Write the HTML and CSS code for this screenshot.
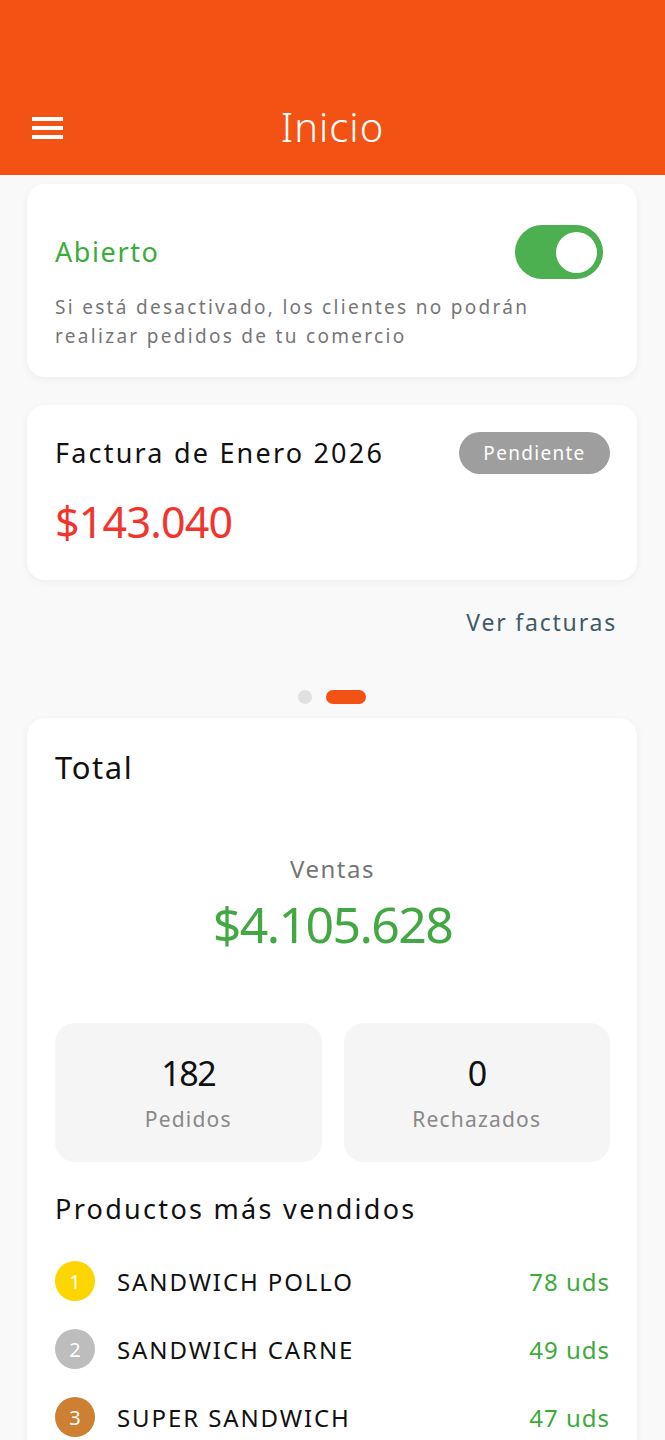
FILE: index.html
```html
<!DOCTYPE html>
<html lang="es">
<head>
<meta charset="utf-8">
<title>Inicio</title>
<link rel="stylesheet" href="styles.css">
</head>
<body>
<header class="appbar">
  <div class="toolbar">
    <div class="menu">
      <svg width="31" height="22" viewBox="0 0 31 22"><rect x="0" y="0" width="31" height="4" fill="#fff"/><rect x="0" y="9" width="31" height="4" fill="#fff"/><rect x="0" y="18" width="31" height="4" fill="#fff"/></svg>
    </div>
    <h1 class="title">Inicio</h1>
    <div></div>
  </div>
</header>
<main class="content">
  <section class="card card-status">
    <div class="status-row">
      <span class="status-label">Abierto</span>
      <span class="toggle"><span class="knob"></span></span>
    </div>
    <p class="status-desc">Si está desactivado, los clientes no podrán realizar pedidos de tu comercio</p>
  </section>

  <section class="card card-invoice">
    <div class="invoice-row">
      <span class="invoice-title">Factura de Enero 2026</span>
      <span class="badge">Pendiente</span>
    </div>
    <div class="invoice-amount">$143.040</div>
  </section>

  <div class="link-row"><a class="link">Ver facturas</a></div>

  <div class="dots"><span class="dot"></span><span class="dot dot-active"></span></div>

  <section class="card card-total">
    <h2 class="total-title">Total</h2>
    <div class="sales-label">Ventas</div>
    <div class="sales-amount">$4.105.628</div>
    <div class="stats">
      <div class="stat"><div class="stat-num">182</div><div class="stat-label">Pedidos</div></div>
      <div class="stat"><div class="stat-num">0</div><div class="stat-label">Rechazados</div></div>
    </div>
    <h3 class="products-title">Productos más vendidos</h3>
    <ul class="products">
      <li class="product"><span class="rank rank-1">1</span><span class="pname">SANDWICH POLLO</span><span class="qty">78 uds</span></li>
      <li class="product"><span class="rank rank-2">2</span><span class="pname">SANDWICH CARNE</span><span class="qty">49 uds</span></li>
      <li class="product"><span class="rank rank-3">3</span><span class="pname">SUPER SANDWICH</span><span class="qty">47 uds</span></li>
    </ul>
  </section>
</main>
</body>
</html>
```
FILE: styles.css
```css
* { box-sizing: border-box; }
html, body { margin: 0; padding: 0; }
body {
  background: #f9f9f9;
  font-family: "Noto Sans", "Open Sans", sans-serif;
  color: #111;
  width: 665px;
  min-height: 1440px;
  overflow: hidden;
}
.appbar {
  background: #f25213;
  height: 175px;
  padding-top: 80px;
}
.toolbar {
  height: 93px;
  display: grid;
  grid-template-columns: 1fr auto 1fr;
  align-items: center;
}
.menu { padding-left: 32px; display: flex; align-items: center; padding-top: 2px; }
.menu svg { display: block; }
.title {
  margin: 0;
  color: #fff;
  font-size: 40px;
  font-weight: 300;
  letter-spacing: 1px;
  line-height: 50px;
}
.content { padding: 9px 28px 0 27px; }
.card {
  background: #fff;
  border-radius: 18px;
  box-shadow: 0 2px 8px rgba(0,0,0,0.05);
}
.card-status { padding: 41px 34px 26px 28px; }
.status-row {
  display: flex;
  align-items: center;
  justify-content: space-between;
  height: 54px;
}
.status-label {
  color: #3cab3a;
  font-size: 27px;
  letter-spacing: 1.6px;
  line-height: 34px;
}
.toggle {
  width: 88px;
  height: 54px;
  border-radius: 27px;
  background: #4caf50;
  display: flex;
  align-items: center;
  justify-content: flex-end;
  padding-right: 6px;
}
.knob {
  width: 41px;
  height: 41px;
  border-radius: 50%;
  background: #fff;
}
.status-desc {
  margin: 14px 0 0;
  max-width: 530px;
  color: #767676;
  font-size: 19px;
  line-height: 29px;
  letter-spacing: 2.3px;
}
.card-invoice {
  margin-top: 28px;
  padding: 27px 27px 33px 28px;
}
.invoice-row {
  display: flex;
  align-items: center;
  justify-content: space-between;
  height: 42px;
}
.invoice-title {
  font-size: 27px;
  letter-spacing: 2.2px;
  line-height: 34px;
  color: #111;
}
.badge {
  width: 151px;
  height: 42px;
  border-radius: 21px;
  background: #9e9e9e;
  color: #fff;
  font-size: 19px;
  letter-spacing: 1.3px;
  display: flex;
  align-items: center;
  justify-content: center;
}
.invoice-amount {
  margin-top: 23px;
  color: #f2352c;
  font-size: 43px;
  line-height: 50px;
  letter-spacing: -0.8px;
}
.link-row {
  display: flex;
  justify-content: flex-end;
  margin-top: 27px;
  padding-right: 20px;
}
.link {
  color: #3e5b6b;
  font-size: 23px;
  line-height: 30px;
  letter-spacing: 1.8px;
}
.dots {
  display: flex;
  justify-content: center;
  gap: 14px;
  margin-top: 53px;
  height: 14px;
}
.dot {
  width: 14px;
  height: 14px;
  border-radius: 7px;
  background: #e0e0e0;
}
.dot-active { width: 40px; background: #f25213; }
.card-total {
  margin-top: 14px;
  padding: 29px 27px 0 28px;
  border-radius: 18px 18px 0 0;
  min-height: 740px;
}
.total-title {
  margin: 0;
  font-weight: 400;
  font-size: 31px;
  line-height: 40px;
  letter-spacing: 1.6px;
  color: #111;
}
.sales-label {
  margin-top: 67px;
  text-align: center;
  color: #767676;
  font-size: 24px;
  line-height: 30px;
  letter-spacing: 1.5px;
}
.sales-amount {
  margin-top: 10px;
  text-align: center;
  color: #43a843;
  font-size: 50px;
  line-height: 60px;
  letter-spacing: -1.6px;
}
.stats {
  margin-top: 69px;
  display: grid;
  grid-template-columns: 1fr 1fr;
  gap: 22px;
}
.stat {
  background: #f5f5f5;
  border-radius: 20px;
  height: 139px;
  padding-top: 30px;
  display: flex;
  flex-direction: column;
  align-items: center;
  gap: 12px;
}
.stat-num {
  font-size: 34px;
  line-height: 40px;
  letter-spacing: -1.5px;
  color: #111;
}
.stat-label {
  font-size: 21px;
  line-height: 28px;
  letter-spacing: 1.2px;
  color: #888;
}
.products-title {
  margin: 29px 0 0;
  font-weight: 400;
  font-size: 27px;
  line-height: 36px;
  letter-spacing: 2.3px;
  color: #111;
}
.products {
  list-style: none;
  margin: 20px 0 0;
  padding: 0;
}
.product {
  height: 68px;
  display: flex;
  align-items: center;
}
.rank {
  width: 40px;
  height: 40px;
  border-radius: 50%;
  color: #fff;
  font-size: 20px;
  display: flex;
  align-items: center;
  justify-content: center;
  flex: none;
}
.rank-1 { background: #fdd500; }
.rank-2 { background: #bdbdbd; }
.rank-3 { background: #cd7f32; }
.pname {
  margin-left: 22px;
  font-size: 24px;
  letter-spacing: 1.9px;
  color: #111;
  flex: 1;
}
.qty {
  font-size: 24px;
  letter-spacing: 1px;
  color: #3cab3a;
}
```
